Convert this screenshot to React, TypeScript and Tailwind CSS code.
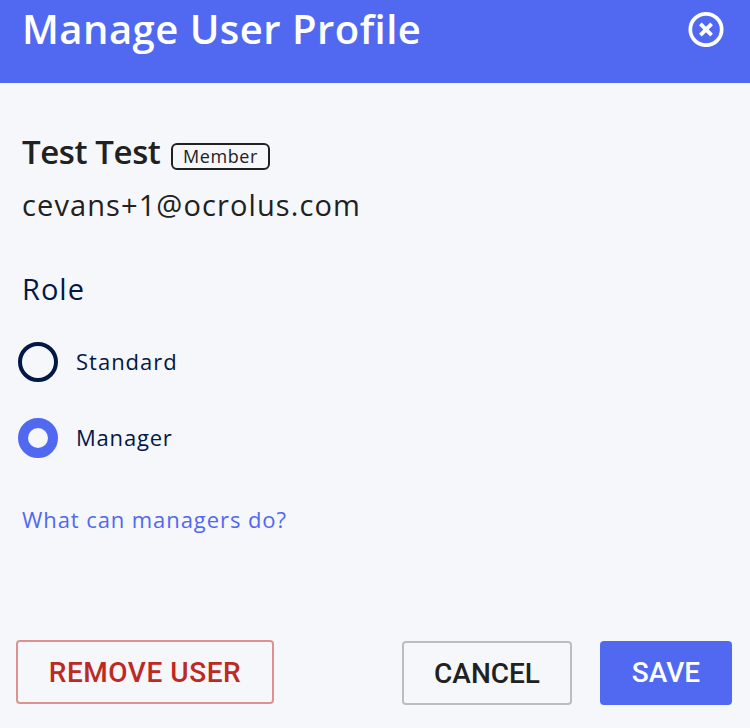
const roles = [
  { label: "Standard", checked: false, spacing: "tracking-[1px]" },
  { label: "Manager", checked: true, spacing: "tracking-[0.8px]" },
];

export default function App() {
  return (
    <div className="flex h-[728px] w-[750px] flex-col overflow-hidden bg-[#f5f7fb] font-['Open_Sans',sans-serif] text-[#212121]">
      <header className="flex h-[83px] shrink-0 items-start justify-between bg-[#5169f1] pl-[22px] pr-[26px] text-white">
        <h1 className="mt-px whitespace-nowrap text-[40px] font-semibold leading-[56px] tracking-[0.48px]">Manage User Profile</h1>
        <button aria-label="Close" className="mt-[11px]">
          <svg width="36" height="36" viewBox="0 0 36 36" fill="none" stroke="currentColor">
            <circle cx="18" cy="18.5" r="15.7" strokeWidth="3.7" />
            <path d="M12.4 12.9 23.6 24.1M23.6 12.9 12.4 24.1" strokeWidth="3.8" />
          </svg>
        </button>
      </header>
      <main className="flex flex-col items-start pl-[22px] pt-11">
        <div className="flex h-12 items-start">
          <h2 className="mt-px w-[149px] whitespace-nowrap text-[33px] font-semibold leading-[48px] tracking-[-0.4px]">Test Test</h2>
          <span className="mt-4 flex h-[27px] w-[99px] items-center justify-center whitespace-nowrap rounded-[6px] border-2 border-[#212121] text-[18px] leading-[23px] tracking-[0.6px]">Member</span>
        </div>
        <p className="mt-[10px] whitespace-nowrap text-[29px] leading-10 tracking-[1.1px]">cevans+1@ocrolus.com</p>
        <h3 className="mt-11 text-[29px] leading-10 tracking-[1px] text-[#041847]">Role</h3>
        <div className="-ml-1 mt-[33px] flex flex-col gap-9 text-[#041847]">
          {roles.map((role) => (
            <label key={role.label} className="flex h-10 items-center">
              <span className={role.checked ? "size-10 rounded-full border-[10px] border-[#5169f1]" : "size-10 rounded-full border-4 border-[#041847]"} />
              <span className={`ml-[18px] pb-0.5 text-[22px] leading-[38px] ${role.spacing}`}>{role.label}</span>
            </label>
          ))}
        </div>
        <a className="mt-[45px] whitespace-nowrap text-[22px] leading-8 tracking-[0.92px] text-[#5169f1]">What can managers do?</a>
      </main>
      <footer className="mt-auto flex items-start pb-[23px] pl-4 font-[Roboto,sans-serif] text-[28px] font-medium leading-[62px]">
        <button className="h-16 w-[258px] whitespace-nowrap rounded-[4px] border-2 border-[#dc9390] tracking-[0.55px] text-[#bc2a23]">REMOVE USER</button>
        <button className="ml-32 mt-px h-16 w-[170px] rounded-[4px] border-2 border-[#bdbdbd]">CANCEL</button>
        <button className="ml-7 mt-px h-16 w-[132px] rounded-[4px] bg-[#5169f1] text-white">SAVE</button>
      </footer>
    </div>
  );
}
